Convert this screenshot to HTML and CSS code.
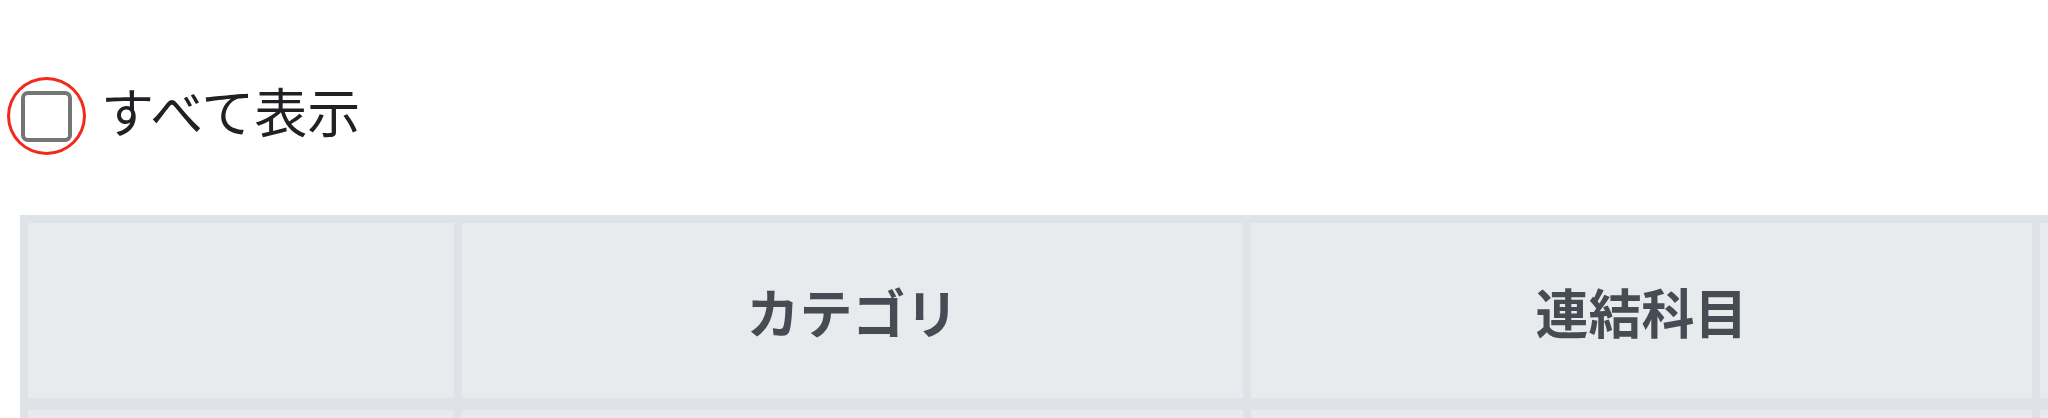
FILE: index.html
```html
<!DOCTYPE html>
<html lang="ja">

<head>
    <meta charset="UTF-8">
    <meta name="viewport" content="width=device-width, initial-scale=1.0">
    <title>連結科目</title>
    <link rel="stylesheet" href="styles.css">
</head>

<body>

    <label class="show-all">
        <span class="check-ring">
            <input type="checkbox" class="check-box" id="showAll">
        </span>
        <span class="show-all-text">すべて表示</span>
    </label>

    <div class="table-wrap">
        <table class="account-table">
            <colgroup>
                <col class="col-select">
                <col class="col-wide">
                <col class="col-wide">
                <col class="col-wide">
            </colgroup>
            <thead>
                <tr>
                    <th></th>
                    <th>カテゴリ</th>
                    <th>連結科目</th>
                    <th></th>
                </tr>
            </thead>
            <tbody>
                <tr>
                    <td></td>
                    <td></td>
                    <td></td>
                    <td></td>
                </tr>
            </tbody>
        </table>
    </div>

</body>

</html>
```

FILE: styles.css
```css
/* 全体 */
body {
    font-family: "Noto Sans CJK JP", "Noto Sans", sans-serif;
    background-color: #fff;
    color: #202124;
    margin: 0;
    padding: 0;
    overflow: hidden;
}

/* すべて表示 */
.show-all {
    display: flex;
    align-items: center;
    padding: 77px 0 0 7px;
    cursor: pointer;
}

.check-ring {
    display: flex;
    align-items: center;
    justify-content: center;
    width: 73px;
    height: 72px;
    border: 3px solid #f22a1c;
    border-radius: 50%;
}

.check-box {
    appearance: none;
    -webkit-appearance: none;
    margin: 0 1px 0 0;
    width: 51px;
    height: 51px;
    border: 4px solid #757575;
    border-radius: 7px;
    box-sizing: border-box;
    background-color: #fff;
    cursor: pointer;
}

.show-all-text {
    font-size: 53px;
    line-height: 1;
    margin-left: 15px;
    margin-top: -12px;
}

/* テーブル */
.table-wrap {
    margin-top: 60px;
    padding-left: 20px;
}

.account-table {
    table-layout: fixed;
    width: 2060px;
    border-collapse: separate;
    border-spacing: 8px;
    background-color: #dfe2e6;
}

.col-select {
    width: 426px;
}

.col-wide {
    width: 781px;
}

.account-table th,
.account-table td {
    background-color: #e8ebee;
    padding: 0;
    height: 175px;
}

.account-table th {
    font-size: 53px;
    font-weight: bold;
    color: #474c54;
    text-align: center;
    vertical-align: middle;
    border-bottom: 4px solid #dfe2e6;
}
```
